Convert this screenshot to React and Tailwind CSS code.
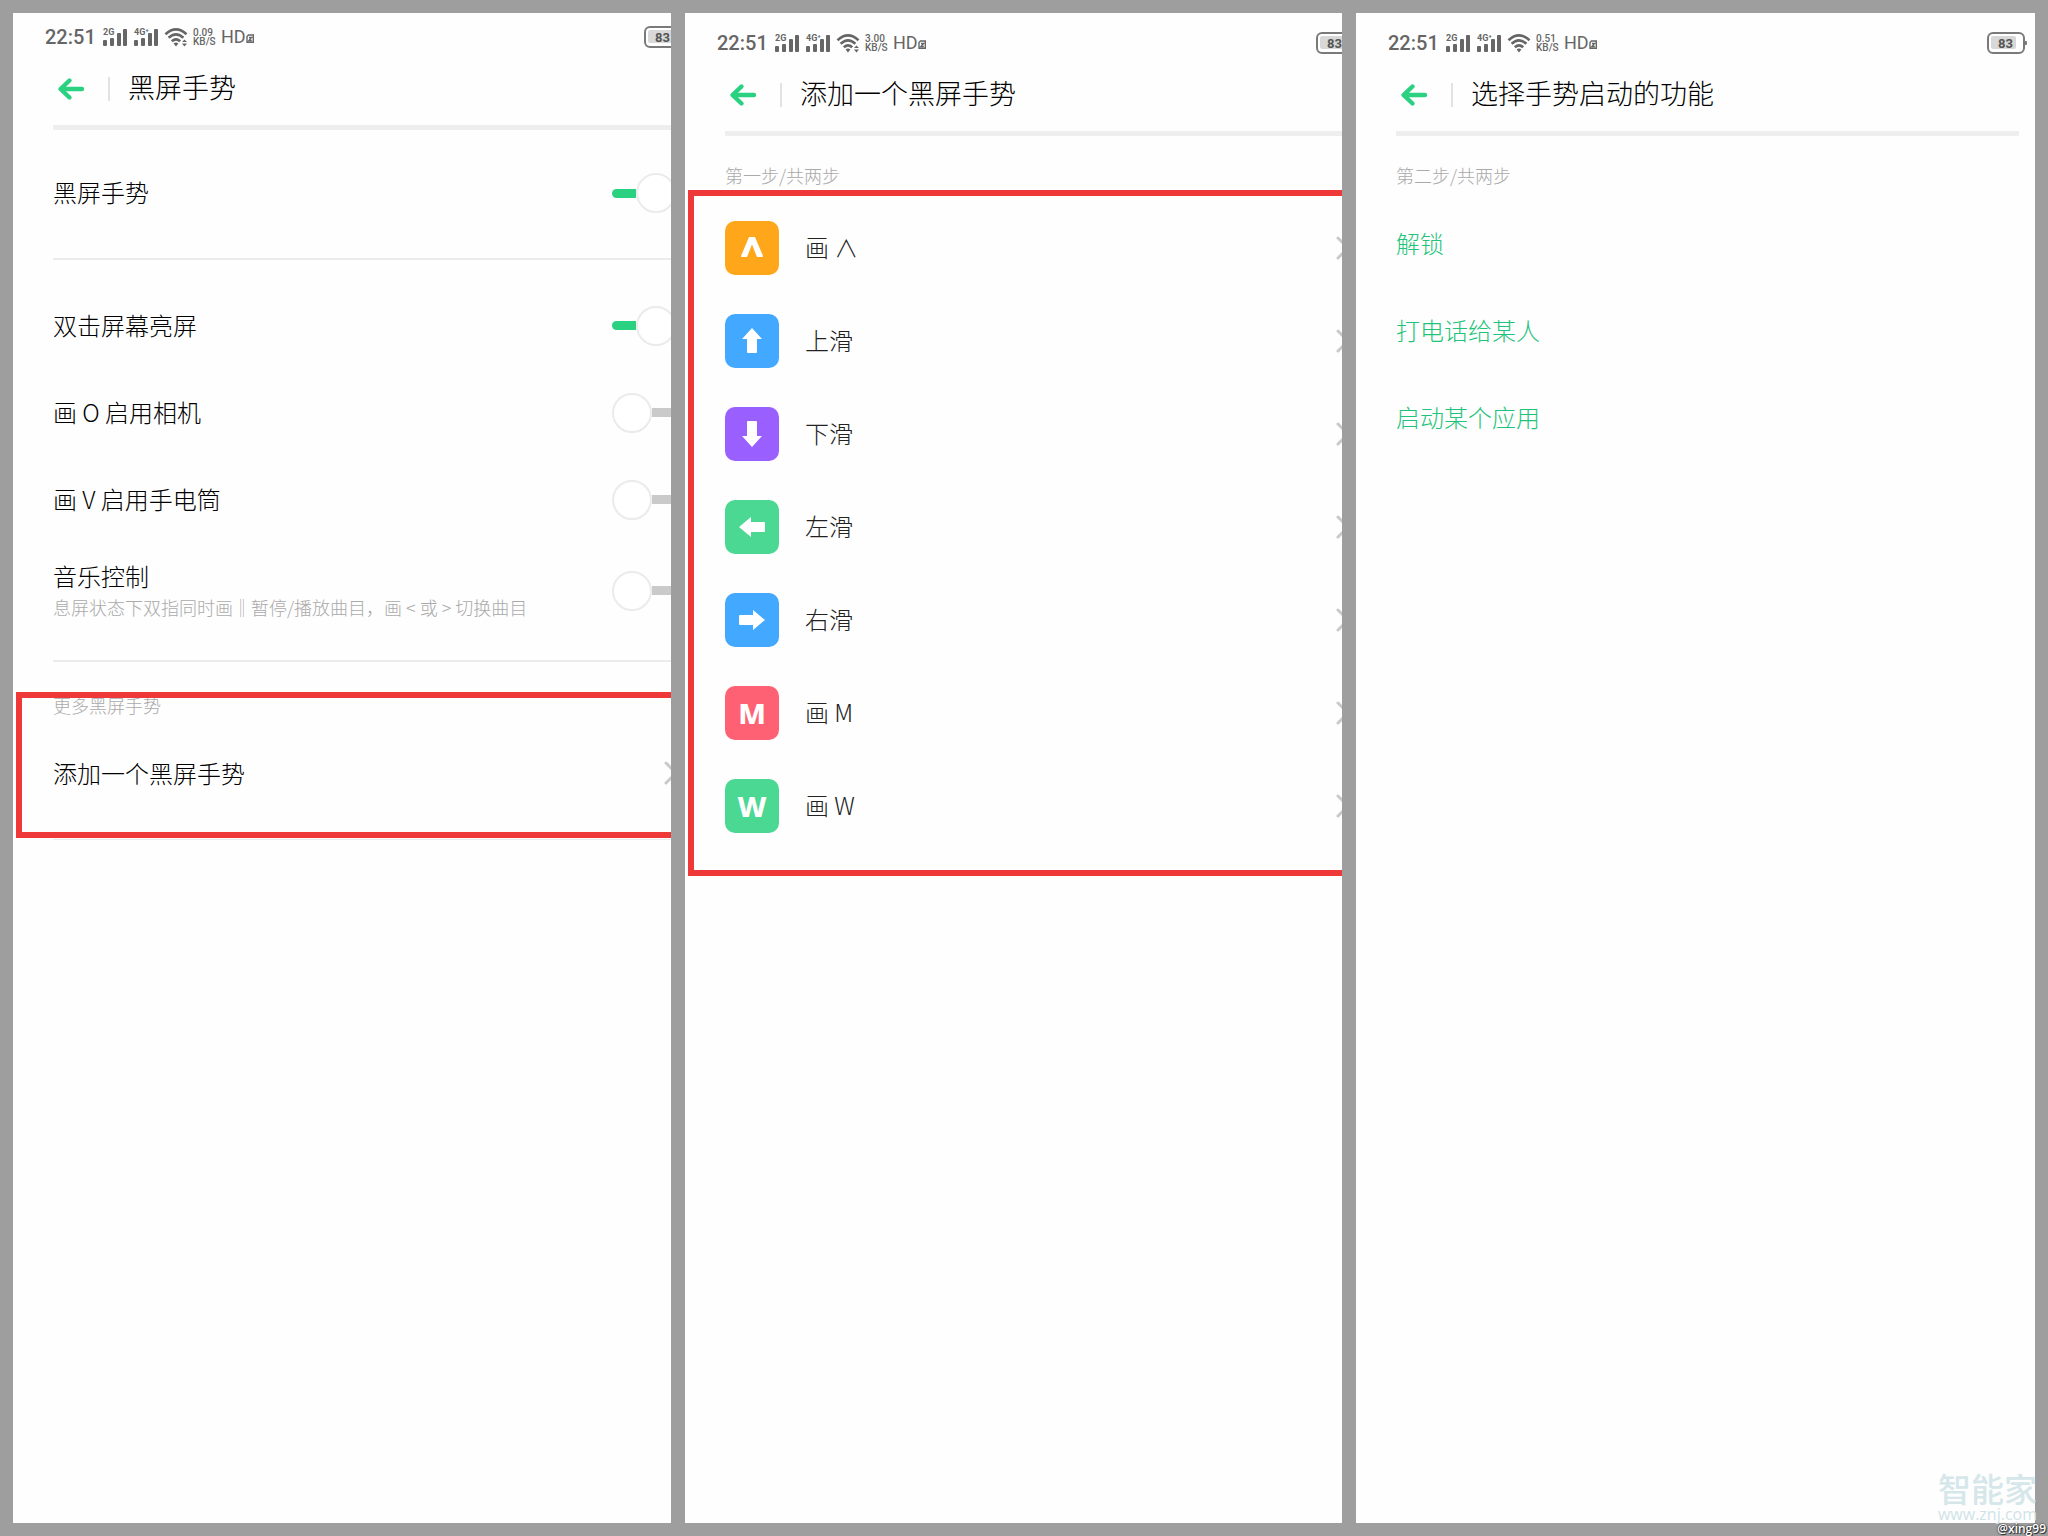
import React, { useState } from 'react';

const switchRows = [
  { id: 'wake', label: '双击屏幕亮屏' },
  { id: 'camera', label: '画 O 启用相机' },
  { id: 'torch', label: '画 V 启用手电筒' }
];

const gestures = [
  { id: 'caret', label: '画 ∧', color: 'bg-[#ffa61b]' },
  { id: 'up', label: '上滑', color: 'bg-[#43a8ff]' },
  { id: 'down', label: '下滑', color: 'bg-[#9a5fff]' },
  { id: 'left', label: '左滑', color: 'bg-[#4bd893]' },
  { id: 'right', label: '右滑', color: 'bg-[#43a8ff]' },
  { id: 'm', label: '画 M', color: 'bg-[#ff6174]', letter: 'M' },
  { id: 'w', label: '画 W', color: 'bg-[#4bd893]', letter: 'W' }
];

const actions = ['解锁', '打电话给某人', '启动某个应用'];

const arrowPaths = {
  up: 'M27 14 L37 25 H32 V38 Q32 39 31 39 H23 Q22 39 22 38 V25 H17 Z',
  down: 'M27 40 L37 29 H32 V15 Q32 14 31 14 H23 Q22 14 22 15 V29 H17 Z',
  left: 'M14 27 L26 17 V22 H39 Q40 22 40 23 V31 Q40 32 39 32 H26 V37 Z',
  right: 'M40 27 L28 17 V22 H15 Q14 22 14 23 V31 Q14 32 15 32 H28 V37 Z'
};

function Signal({ name }) {
  return (
    <svg className="h-5 w-[26px]" viewBox="0 0 26 20" fill="#666">
      <text x="1" y="8" fontFamily="Roboto" fontSize="9" fontWeight="700">{name}</text>
      <rect x="1" y="13" width="4" height="6" rx="1" />
      <rect x="8" y="11" width="4" height="8" rx="1" />
      <rect x="15" y="6" width="4" height="13" rx="1" />
      <rect x="21" y="2" width="4" height="17" rx="1" />
    </svg>
  );
}

function Wifi({ transfer }) {
  return (
    <svg className="h-5 w-6" viewBox="0 0 24 20" fill="none" stroke="#666" strokeWidth="2.6">
      <path d="M1.5 7.2 Q12 -2.4 22.5 7.2" />
      <path d="M4.6 10.8 Q12 4 19.4 10.8" />
      <path d="M7.8 14.2 Q12 10.4 16.2 14.2" />
      <path d="M9.6 16.4 Q12 14.6 14.4 16.4 L12 19.4 Z" fill="#666" stroke="none" />
      {transfer && (
        <path d="M18 15 L20.5 12.4 L23 15 Z M18 16.6 L20.5 19.4 L23 16.6 Z" fill="#666" stroke="none" />
      )}
    </svg>
  );
}

function Battery() {
  return (
    <svg className="h-[22px] w-10" viewBox="0 0 40 22">
      <rect x="1" y="1" width="36" height="20" rx="5" fill="#fff" stroke="#7a7a7a" strokeWidth="2" />
      <rect x="4" y="4" width="25" height="13" rx="2" fill="#d8d8d8" />
      <rect x="37" y="9" width="3" height="4" rx="1" fill="#7a7a7a" />
      <text x="11" y="16" fontFamily="Roboto" fontSize="13" fontWeight="700" fill="#555">83</text>
    </svg>
  );
}

function Chevron() {
  return (
    <svg className="h-6 w-4 shrink-0" viewBox="0 0 16 24" fill="none" stroke="#c9c9c9" strokeWidth="3" strokeLinecap="round">
      <path d="M2 2 L12 12 L2 22" />
    </svg>
  );
}

function Phone({ title, speed, transfer, inset, children }) {
  return (
    <section className={`overflow-hidden bg-[#fefefe] ${inset ? 'pt-[6px]' : ''}`}>
      <div className="min-w-[679px]">
        <div className="flex h-12 items-center pl-8 pr-2 text-[#666]">
          <span className="w-[57px] font-[Roboto] text-[20px] font-medium">22:51</span>
          <div className="flex items-center gap-[5px]">
            <Signal name="2G" />
            <Signal name="4G⁺" />
            <Wifi transfer={transfer} />
            <span className="flex w-6 flex-col font-[Roboto] text-[10px] font-medium leading-[9px]">
              <span>{speed}</span>
              <span>KB/S</span>
            </span>
          </div>
          <span className="ml-1 flex items-end font-[Roboto] text-[18px] font-normal leading-5">
            HD
            <svg className="mb-1 h-[9px] w-2" viewBox="0 0 8 9" fill="none" stroke="#666" strokeWidth="1.4">
              <path d="M2.5 1 H7.3 V8.3 H1 V2.5 Z M3 3.5 H5.5 L3 6.5 H5.8" />
            </svg>
          </span>
          <span className="ml-auto">
            <Battery />
          </span>
        </div>
        <header className="flex h-14 items-center pl-11">
          <button type="button" aria-label="返回">
            <svg className="h-6 w-7" viewBox="0 0 28 24" fill="none" stroke="#2ad181" strokeWidth="4.4" strokeLinecap="round" strokeLinejoin="round">
              <path d="M25 12 H4 M12.5 3.5 L3.5 12 L12.5 20.5" />
            </svg>
          </button>
          <span className="ml-[23px] h-6 w-[2px] bg-[#e2e2e2]" />
          <h1 className="ml-[18px] pb-1 text-[27px] leading-9 text-black">{title}</h1>
        </header>
        <div className="ml-10 mr-4 mt-2 h-[5px] bg-[#eee]" />
        {children}
      </div>
    </section>
  );
}

function SwitchRow({ label, note, on, onToggle, height }) {
  return (
    <label className={`flex items-center justify-between pl-10 pr-4 ${height}`}>
      <span className={`flex flex-col text-[24px] leading-8 text-black ${note ? '' : 'pb-[2px]'}`}>
        {label}
        {note && <span className="text-[18px] leading-[30px] text-[#aaa]">{note}</span>}
      </span>
      <input type="checkbox" className="peer sr-only" checked={on} onChange={onToggle} />
      <span className="flex h-10 w-16 shrink-0 items-center peer-checked:hidden">
        <span className="size-10 rounded-full border-2 border-[#ebebeb] bg-white" />
        <span className="h-[9px] grow rounded-r-full bg-[#cacaca]" />
      </span>
      <span className="hidden h-10 w-16 shrink-0 items-center peer-checked:flex">
        <span className="h-[9px] grow rounded-l-full bg-[#2ad181]" />
        <span className="size-10 rounded-full border-2 border-[#ebebeb] bg-white" />
      </span>
    </label>
  );
}

function GestureIcon({ gesture }) {
  return (
    <span className={`flex size-[54px] items-center justify-center rounded-[10px] ${gesture.color}`}>
      {gesture.letter ? (
        <span className="font-['Noto_Sans'] text-[29px] font-extrabold leading-none text-white">{gesture.letter}</span>
      ) : (
        <svg className="size-full" viewBox="0 0 54 54" fill="#fff">
          {gesture.id === 'caret' ? (
            <path d="M24 16 H30 L38 35 Q38 36 37 36 H32 L27 23.5 L22 36 H17 Q16 36 16 35 Z" />
          ) : (
            <path d={arrowPaths[gesture.id]} />
          )}
        </svg>
      )}
    </span>
  );
}

export default function App() {
  const [enabled, setEnabled] = useState({ main: true, wake: true });
  const toggle = (id) => setEnabled(prev => ({ ...prev, [id]: !prev[id] }));

  return (
    <main
      lang="zh-CN"
      className="relative grid min-h-screen grid-cols-[658fr_657fr_679fr] gap-x-[14px] overflow-hidden bg-[#9e9e9e] p-[13px] font-['Noto_Sans_CJK_SC',sans-serif] font-light"
    >
      <Phone title="黑屏手势" speed="0.09" transfer>
        <SwitchRow label="黑屏手势" height="h-32 pb-[2px]" on={!!enabled.main} onToggle={() => toggle('main')} />
        <div className="ml-10 h-[2px] bg-[#ececec]" />
        <div className="py-[22px]">
          {switchRows.map(row => (
            <SwitchRow key={row.id} label={row.label} height="h-[87px]" on={!!enabled[row.id]} onToggle={() => toggle(row.id)} />
          ))}
          <SwitchRow
            label="音乐控制"
            note="息屏状态下双指同时画‖暂停/播放曲目，画 < 或 > 切换曲目"
            height="h-[95px]"
            on={!!enabled.music}
            onToggle={() => toggle('music')}
          />
        </div>
        <div className="ml-10 h-[2px] bg-[#ececec]" />
        <div className="relative pb-3 pt-7">
          <h2 className="pl-10 text-[18px] leading-[30px] text-[#aaa]">更多黑屏手势</h2>
          <button type="button" className="flex h-[106px] w-full items-center justify-between pl-10 pr-3 text-[24px] text-black">
            添加一个黑屏手势
            <Chevron />
          </button>
          {/* highlight frame */}
          <div className="pointer-events-none absolute bottom-0 left-[3px] right-0 top-[30px] border-[6px] border-r-0 border-[#ef3838]" />
        </div>
        <div className="ml-10 mt-px h-px bg-[#ececec]" />
      </Phone>

      <Phone title="添加一个黑屏手势" speed="3.00" transfer inset>
        <h2 className="mb-[11px] pl-10 pt-6 text-[18px] leading-[30px] text-[#aaa]">第一步/共两步</h2>
        <div className="relative pb-6">
          {gestures.map(gesture => (
            <button key={gesture.id} type="button" className="flex h-[93px] w-full items-center pl-10 pr-3 text-[24px] text-[#222]">
              <GestureIcon gesture={gesture} />
              <span className="ml-[26px] mr-auto pb-[2px]">{gesture.label}</span>
              <Chevron />
            </button>
          ))}
          <div className="pointer-events-none absolute -top-[11px] bottom-0 left-[3px] right-0 border-[6px] border-r-0 border-[#ef3838]" />
        </div>
      </Phone>

      <Phone title="选择手势启动的功能" speed="0.51" inset>
        <h2 className="mb-[11px] pl-10 pt-6 text-[18px] leading-[30px] text-[#aaa]">第二步/共两步</h2>
        {actions.map(action => (
          <button key={action} type="button" className="flex h-[87px] w-full items-center pb-1 pl-10 text-[24px] text-[#1fc47a]">
            {action}
          </button>
        ))}
      </Phone>

      {/* watermark */}
      <div className="pointer-events-none absolute bottom-0 right-0 flex flex-col items-end">
        <span className="mr-[11px] text-[33px] font-medium leading-9 text-[#d5e7ea]">智能家</span>
        <span className="mr-[11px] font-['Open_Sans'] text-[16px] font-normal leading-4 text-[#cfe3e7]">www.znj.com</span>
        <span className="mr-[2px] font-['Open_Sans'] text-[12px] font-semibold leading-[14px] text-white [text-shadow:0_0_2px_#000,1px_1px_0_#444]">@xing99</span>
      </div>
    </main>
  );
}
